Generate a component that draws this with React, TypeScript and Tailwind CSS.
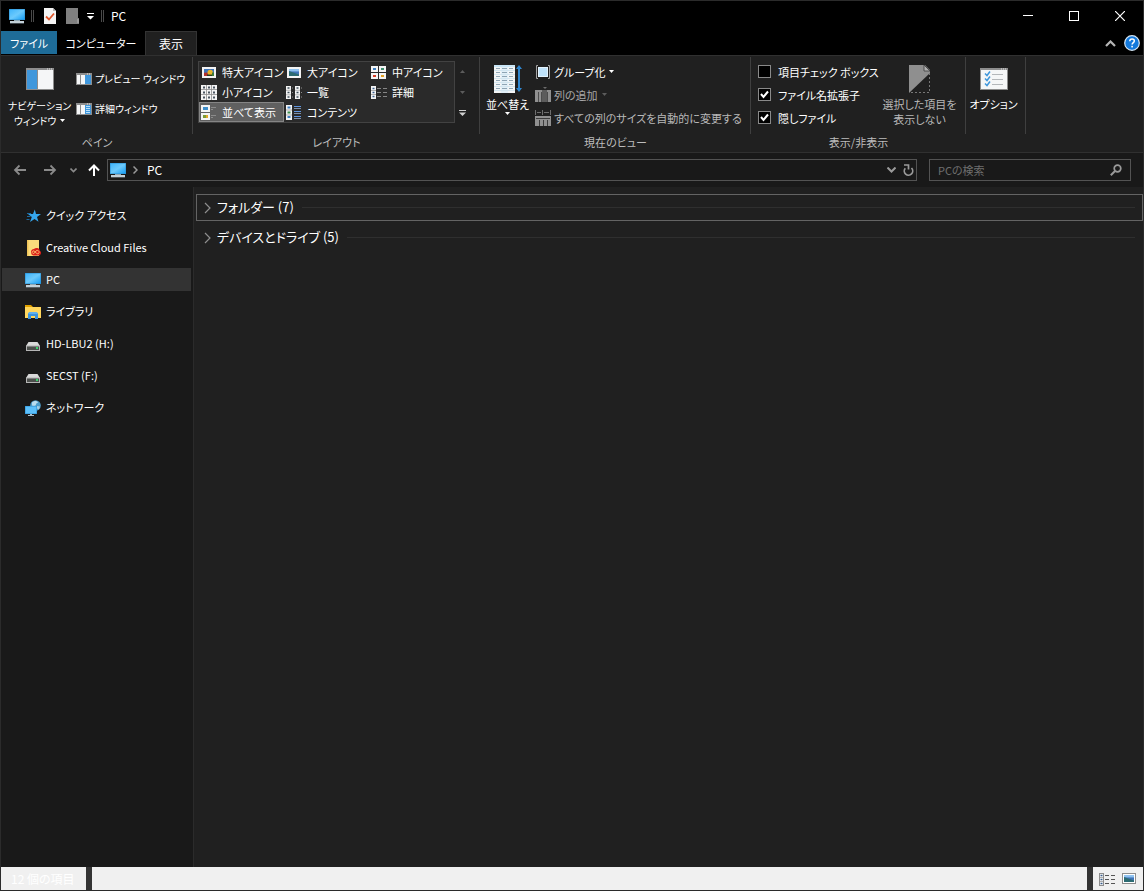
import { useState } from "react";
import type { ReactNode } from "react";

/* ---------- icons ---------- */

function Monitor() {
  return (
    <svg width="16" height="16" viewBox="0 0 16 16" aria-hidden="true">
      <defs>
        <linearGradient id="screen" x1="0" y1="0" x2="1" y2="1">
          <stop offset="0" stopColor="#3fb4fb" />
          <stop offset="0.5" stopColor="#6ccafd" />
          <stop offset="1" stopColor="#159df5" />
        </linearGradient>
      </defs>
      <rect x="0" y="1" width="16" height="11" fill="#2b8fd0" />
      <rect x="0.5" y="1.5" width="15" height="10" fill="url(#screen)" />
      <rect x="5" y="12" width="6" height="1" fill="#8fa7b5" />
      <rect x="1" y="13" width="14" height="2" fill="#c3d0d8" />
      <rect x="1" y="15" width="14" height="0.5" fill="#7e8e98" />
    </svg>
  );
}

function TaskSheet() {
  return (
    <svg width="12" height="16" viewBox="0 0 12 16" aria-hidden="true">
      <path d="M0 0h9l3 3v13H0z" fill="#f4f4f4" />
      <path d="M9 0v3h3z" fill="#b5b5b5" />
      <path d="M2 8.500l3 3 5-6" fill="none" stroke="#e0562b" strokeWidth="1.800" />
    </svg>
  );
}

function GraySheet() {
  return (
    <svg width="13" height="16" viewBox="0 0 13 16" aria-hidden="true">
      <path d="M0 0h12v10h1v6H0z" fill="#808080" />
      <path d="M11 11h2v4h-2z" fill="#9a9a9a" />
    </svg>
  );
}

function Caret({ className = "" }: { className?: string }) {
  return (
    <svg width="5" height="3" viewBox="0 0 5 3" className={className} aria-hidden="true">
      <path d="M0 0h5L2.5 3z" fill="currentColor" />
    </svg>
  );
}

function BigPane() {
  return (
    <svg width="28" height="22" viewBox="0 0 28 22" aria-hidden="true">
      <rect width="28" height="22" fill="#8d8d8d" />
      <rect x="1" y="2" width="10" height="19" fill="#3f97dc" />
      <rect x="12" y="2" width="15" height="19" fill="#f5f6f7" />
      <path d="M21 1h1M23 1h1M25 1h1" stroke="#e6e6e6" strokeWidth="1" />
    </svg>
  );
}

function SmallPane({ lines = false }: { lines?: boolean }) {
  return (
    <svg width="16" height="12" viewBox="0 0 16 12" aria-hidden="true">
      <rect width="16" height="12" fill="#8d8d8d" />
      <rect x="1" y="2" width="3" height="9" fill="#f5f6f7" />
      <rect x="5" y="2" width="4" height="9" fill="#f5f6f7" />
      <rect x="9" y="2" width="6" height="9" fill="#3f97dc" />
      {lines && <path d="M10 3.5h4M10 5.5h4M10 7.5h4M10 9.5h4" stroke="#b9e0fb" strokeWidth="1" />}
      <path d="M11 1h1M13 1h1" stroke="#e6e6e6" strokeWidth="1" />
    </svg>
  );
}

function Photo({ x, y, w, h, colorful = false }: { x: number; y: number; w: number; h: number; colorful?: boolean }) {
  return (
    <g transform={`translate(${x} ${y})`}>
      <rect width={w} height={h} fill="#3f74b8" />
      {colorful ? (
        <>
          <path d={`M0 ${h}V${h * 0.55}L${w * 0.4} ${h * 0.5}V${h}z`} fill="#b3322c" />
          <circle cx={w * 0.62} cy={h * 0.5} r={h * 0.38} fill="#e9b52a" />
          <rect x={w * 0.8} y={h * 0.5} width={w * 0.2} height={h * 0.5} fill="#3e7d36" />
          <path d={`M${w * 0.3} ${h * 0.8}h${w * 0.5}v${h * 0.2}h-${w * 0.5}z`} fill="#2c3c20" />
        </>
      ) : (
        <>
          <rect width={w} height={h * 0.35} fill="#8fc2f0" />
          <path d={`M0 ${h * 0.3}L${w} ${h * 0.8}V${h}H0z`} fill="#2c6b72" />
        </>
      )}
    </g>
  );
}

function ExtraLargeIcon() {
  return (
    <svg width="16" height="16" viewBox="0 0 16 16" aria-hidden="true">
      <rect x="1" y="3" width="14" height="11" fill="#f4f4f4" />
      <Photo x={3} y={5} w={10} h={7} colorful />
    </svg>
  );
}

function LargeIcon() {
  return (
    <svg width="16" height="16" viewBox="0 0 16 16" aria-hidden="true">
      <rect x="1" y="3" width="14" height="11" fill="#f4f4f4" />
      <Photo x={3} y={5} w={10} h={7} />
    </svg>
  );
}

function MediumIcon() {
  return (
    <svg width="16" height="16" viewBox="0 0 16 16" aria-hidden="true">
      <path d="M0 2h7v6H0zM8 2h7v6H8zM0 9h7v6H0zM8 9h7v6H8z" fill="#f4f4f4" />
      <rect x="2" y="4" width="3" height="2" fill="#3f7fc0" />
      <rect x="10" y="4" width="3" height="2" fill="#3f8f70" />
      <rect x="2" y="11" width="3" height="2" fill="#d63d26" />
      <rect x="10" y="11" width="3" height="2" fill="#e5a021" />
    </svg>
  );
}

function SmallIcon() {
  return (
    <svg width="16" height="16" viewBox="0 0 16 16" aria-hidden="true">
      <rect x="0" y="1" width="16" height="15" fill="#f4f4f4" />
      <path d="M5.5 1v15M10.5 1v15M0 5.500h16M0 10.500h16" stroke="#8d8d8d" strokeWidth="0.800" />
      <path d="M2 3.500h2M7 3.500h2M12 3.500h2M2 8.500h2M7 8.500h2M12 8.500h2M2 13.500h2M7 13.500h2M12 13.500h2" stroke="#4a5560" strokeWidth="2" />
    </svg>
  );
}

function ListIcon() {
  return (
    <svg width="16" height="16" viewBox="0 0 16 16" aria-hidden="true">
      <path d="M0 2h5v13H0zM9 2h5v13H9z" fill="#f4f4f4" />
      <path d="M1.5 4h2M1.5 8.5h2M1.5 13h2M10.5 4h2M10.5 8.5h2M10.5 13h2" stroke="#40505c" strokeWidth="1.6" />
      <path d="M0 6.3h5M0 10.8h5M9 6.3h5M9 10.8h5" stroke="#8d8d8d" strokeWidth="0.6" />
      <path d="M6 4h1M6 8.5h1M6 13h1M15 4h1M15 8.5h1M15 13h1" stroke="#8d8d8d" />
    </svg>
  );
}

function DetailsIcon({ light = false }: { light?: boolean }) {
  return (
    <svg width="17" height="16" viewBox="0 0 17 16" aria-hidden="true">
      <rect x="0.5" y="2.5" width="4" height="12" fill="#f8f8f8" stroke={light ? "#8d8d8d" : "#f4f4f4"} />
      <path d="M1.5 4.5h2M1.5 8.5h2M1.5 12.5h2" stroke="#3b5f8c" strokeWidth="1.4" />
      <path d="M0 6.5h5M0 10.5h5" stroke="#8d8d8d" strokeWidth="0.7" />
      <path
        d="M6 4.5h4M12 4.5h4M6 8.5h4M12 8.5h4M6 12.5h4M12 12.5h4"
        stroke={light ? "#555555" : "#868686"}
        strokeWidth="1"
      />
    </svg>
  );
}

function TilesIcon() {
  return (
    <svg width="16" height="16" viewBox="0 0 16 16" aria-hidden="true">
      <path d="M0 1h9v7H0zM0 9h9v7H0z" fill="#f4f4f4" />
      <rect x="2" y="3" width="5" height="3" fill="#3f8ec9" />
      <rect x="2" y="11" width="3" height="3" fill="#7b9a35" />
      <rect x="5" y="11" width="2" height="3" fill="#e0a72a" />
      <path d="M10 3.5h5M10 5.5h2M10 11.5h5M10 13.5h2" stroke="#8b8b8b" />
    </svg>
  );
}

function ContentIcon() {
  return (
    <svg width="16" height="16" viewBox="0 0 16 16" aria-hidden="true">
      <rect x="0" y="1" width="6" height="15" fill="#f4f4f4" />
      <path d="M1.5 3.5h3M1.5 13h3" stroke="#3f7fc0" strokeWidth="2" />
      <path d="M1.5 8.5h3" stroke="#3d8f4f" strokeWidth="2" />
      <path d="M0 6h6M0 11h6" stroke="#8d8d8d" strokeWidth="0.7" />
      <path d="M8 2.5h7M8 7.5h7M8 12.5h7" stroke="#5f96e0" />
      <path d="M8 4.5h7M8 9.5h7M8 14.5h7" stroke="#7d8fa8" />
    </svg>
  );
}

function SortIcon() {
  return (
    <svg width="28" height="28" viewBox="0 0 28 28" aria-hidden="true">
      <rect x="0" y="0" width="21" height="28" fill="#f3f5f6" />
      <rect x="0" y="0" width="21" height="2" fill="#c9e6f7" />
      <rect x="7" y="2" width="7" height="26" fill="#e2f0f8" />
      {[3, 7, 11, 15, 19, 23].map((y) => (
        <path key={y} d={`M2 ${y + 0.5}h4M8 ${y + 0.5}h5M15 ${y + 0.5}h4`} stroke="#8fa5b4" />
      ))}
      {[5, 9, 13, 17, 21, 25].map((y) => (
        <path key={y} d={`M0 ${y + 0.5}h21`} stroke="#d3e6f0" />
      ))}
      <path d="M25 3v22" stroke="#2f86cf" strokeWidth="2" />
      <path d="M22 4l3-4 3 4zM22 23l3 4 3-4z" fill="#2f86cf" />
    </svg>
  );
}

function GroupIcon() {
  return (
    <svg width="16" height="16" viewBox="0 0 16 16" aria-hidden="true">
      <path d="M3 1.5H1.5v13H3M13 1.5h1.5v13H13" fill="none" stroke="#a5a5a5" />
      <rect x="3" y="3" width="10" height="10" fill="#bfe2fa" />
      <rect x="3.5" y="3.5" width="9" height="9" fill="none" stroke="#e4f3fd" />
    </svg>
  );
}

function AddColumnIcon() {
  return (
    <svg width="16" height="16" viewBox="0 0 16 16" aria-hidden="true">
      <path d="M8 0h4l-2 2z" fill="#6c6c6c" />
      <path d="M0 3h7v12H0zM12 3h4v12h-4z" fill="#909090" />
      <rect x="7" y="3" width="5" height="12" fill="#5c5c5c" />
      <path d="M3.5 5v10M6.5 5v10M12.5 5v10" stroke="#4c4c4c" />
    </svg>
  );
}

function FitColumnsIcon() {
  return (
    <svg width="16" height="16" viewBox="0 0 16 16" aria-hidden="true">
      <path d="M0.5 0v5M7.5 0v5M15.5 0v5M2 2.5h4M9 2.5h5" stroke="#6e6e6e" />
      <rect x="0" y="6" width="16" height="10" fill="#909090" />
      <path d="M1 8.5h14M4.5 10v6M8.5 10v6M12.5 10v6" stroke="#3c3c3c" />
    </svg>
  );
}

function HideIcon() {
  return (
    <svg width="22" height="28" viewBox="0 0 22 28" aria-hidden="true">
      <path d="M0 0h16l5 5v3L0 28z" fill="#8f8f8f" />
      <path d="M15 0v6h6z" fill="#b0b0b0" stroke="#3c3c3c" strokeWidth="0.8" />
      <path d="M20.5 8v19.5H1" fill="none" stroke="#777777" strokeDasharray="2 2" />
    </svg>
  );
}

function OptionsIcon() {
  return (
    <svg width="28" height="22" viewBox="0 0 28 22" aria-hidden="true">
      <rect width="28" height="22" fill="#8d8d8d" />
      <rect x="1" y="2" width="26" height="19" fill="#f5f6f7" />
      <path d="M21 1h1M23 1h1M25 1h1" stroke="#e6e6e6" />
      <path d="M12 6.5h11M12 11.5h11M12 16.5h11" stroke="#b4b7ba" />
      <path d="M5 5.500l2 2 3-4M5 10.500l2 2 3-4M5 15.500l2 2 3-4" fill="none" stroke="#3f97dc" strokeWidth="1.5" />
    </svg>
  );
}

function QuickStar() {
  return (
    <svg width="16" height="16" viewBox="0 0 16 16" aria-hidden="true">
      <path d="M9.800 1.500l1.200 4.500H16l-4 3 1.500 4.700L9.500 11 5 14l1.800-5L3 6h5z" fill="#35a7ee" />
      <path d="M2 5.500h4M2 8.500h3.500M1.500 11.500h3" stroke="#1c699e" strokeWidth="1.200" />
    </svg>
  );
}

function CreativeFolder() {
  return (
    <svg width="16" height="16" viewBox="0 0 16 16" aria-hidden="true">
      <rect x="2" y="0" width="12" height="16" fill="#fbdc7c" />
      <rect x="2" y="0" width="1.500" height="16" fill="#f0c358" />
      <path d="M6 12.500a3 3 0 0 1 3-3.500 3.500 3.500 0 0 1 6 2 2.500 2.500 0 0 1-1 4.500H8.500A3 3 0 0 1 6 12.500z" fill="#db1f1a" />
      <path d="M12.500 14a1.800 1.800 0 1 0-1.500-3L9.500 13a1.300 1.300 0 1 1-.5-2c1 0 1.500 2.500 3.500 2.500" fill="none" stroke="#fbdc7c" strokeWidth="0.800" />
    </svg>
  );
}

function LibraryIcon() {
  return (
    <svg width="16" height="16" viewBox="0 0 16 16" aria-hidden="true">
      <path d="M0 1h6l2 2H0z" fill="#e0a100" />
      <path d="M0 3h16v11H0z" fill="#ffd75e" />
      <path d="M3 9h10v6h-3v-3H6v3H3z" fill="#3a93de" />
      <path d="M4 8h8l1 2H3z" fill="#5fb0ee" />
    </svg>
  );
}

function DriveIcon() {
  return (
    <svg width="16" height="16" viewBox="0 0 16 16" aria-hidden="true">
      <path d="M3.500 6h9L15 10H1z" fill="#d9d9d9" />
      <rect x="1" y="9.500" width="14" height="5.500" fill="#b5b5b5" />
      <rect x="2" y="10.500" width="12" height="3.500" fill="#4c4f4c" />
      <rect x="11" y="11" width="2" height="2" fill="#39d36a" />
    </svg>
  );
}

function NetworkIcon() {
  return (
    <svg width="16" height="16" viewBox="0 0 16 16" aria-hidden="true">
      <circle cx="10.500" cy="5.500" r="5.300" fill="#4d9cc9" />
      <path d="M7 2.500c2-2 5-2 6 0-1 1-2 .500-2 2s-2 1.500-4 1z" fill="#b9dcef" />
      <path d="M12 6l3 .500-1 3-2-1z" fill="#a3cfe6" />
      <rect x="0" y="6" width="12" height="8" fill="#2b8fd0" />
      <rect x="0.500" y="6.500" width="11" height="7" fill="#5cc0fb" />
      <path d="M5 14h2v1h2v1H3v-1h2z" fill="#a9bcc8" />
    </svg>
  );
}

/* ---------- ribbon building blocks ---------- */

function RibbonGroup({ label, width, children }: { label?: string; width: string; children: ReactNode }) {
  return (
    <section aria-label={label} className={`flex shrink-0 flex-col ${width}`}>
      <div className="flex h-[77px] border-r border-[#3f3f3f]">{children}</div>
      <div className="text-center leading-4 text-[#bdbdbd]">{label}</div>
    </section>
  );
}

const layouts: { name: string; icon: ReactNode }[] = [
  { name: "特大アイコン", icon: <ExtraLargeIcon /> },
  { name: "大アイコン", icon: <LargeIcon /> },
  { name: "中アイコン", icon: <MediumIcon /> },
  { name: "小アイコン", icon: <SmallIcon /> },
  { name: "一覧", icon: <ListIcon /> },
  { name: "詳細", icon: <DetailsIcon /> },
  { name: "並べて表示", icon: <TilesIcon /> },
  { name: "コンテンツ", icon: <ContentIcon /> },
];

function LayoutGallery() {
  const [selected, setSelected] = useState("並べて表示");
  return (
    <div className="mt-1 ml-[5px] flex h-[62px]">
      <div className="grid w-[257px] grid-cols-3 grid-rows-3 border border-[#424242] bg-[#2a2a2a]">
        {layouts.map(({ name, icon }) => (
          <button
            key={name}
            type="button"
            aria-pressed={selected === name}
            onClick={() => setSelected(name)}
            className={`flex min-w-0 items-center gap-[5px] border px-px whitespace-nowrap ${
              selected === name ? "border-[#858585] bg-[#606060]" : "border-transparent"
            }`}
          >
            <span className="w-4 shrink-0">{icon}</span>
            {name}
          </button>
        ))}
      </div>
      <div className="flex w-[14px] flex-col">
        <button type="button" aria-label="上へスクロール" className="flex flex-1 items-center justify-center text-[#5c5c5c]">
          <Caret className="rotate-180" />
        </button>
        <button type="button" aria-label="下へスクロール" className="flex flex-1 items-center justify-center text-[#5c5c5c]">
          <Caret />
        </button>
        <button type="button" aria-label="その他" className="flex flex-1 items-center justify-center text-[#d0d0d0]">
          <svg width="7" height="6" viewBox="0 0 7 6" aria-hidden="true">
            <path d="M0 0h7v1H0zM0 2.500h7L3.500 6z" fill="currentColor" />
          </svg>
        </button>
      </div>
    </div>
  );
}

function CheckRow({ label, checked }: { label: string; checked?: boolean }) {
  return (
    <label className="flex h-[23px] items-center gap-[7px] whitespace-nowrap">
      <span className="grid shrink-0">
        <input
          type="checkbox"
          defaultChecked={checked}
          className="peer col-start-1 row-start-1 size-[13px] appearance-none border border-[#8a8a8a] bg-black"
        />
        <svg
          width="13"
          height="13"
          viewBox="0 0 13 13"
          aria-hidden="true"
          className="pointer-events-none invisible col-start-1 row-start-1 peer-checked:visible"
        >
          <path d="M3 6l2.500 3L10 3.500" fill="none" stroke="#ffffff" strokeWidth="2" />
        </svg>
      </span>
      {label}
    </label>
  );
}

/* ---------- page sections ---------- */

function TitleBar() {
  return (
    <header className="flex h-[30px] items-center bg-black">
      <div className="flex flex-1 items-center pl-2">
        <Monitor />
        <span className="mx-[6px] h-3 w-[3px] border-x border-[#4a4a4a]" />
        <button type="button" aria-label="プロパティ" className="ml-1">
          <TaskSheet />
        </button>
        <button type="button" aria-label="新しいフォルダー" className="ml-[10px]">
          <GraySheet />
        </button>
        <button type="button" aria-label="クイック アクセス ツール バーのカスタマイズ" className="ml-2 text-white">
          <svg width="7" height="7" viewBox="0 0 7 7" aria-hidden="true">
            <path d="M0 0h7v1H0zM0 3h7L3.500 6.500z" fill="currentColor" />
          </svg>
        </button>
        <span className="mx-[7px] h-3 w-[3px] border-x border-[#4a4a4a]" />
        <h1 className="text-xs">PC</h1>
      </div>
      <button type="button" aria-label="最小化" className="flex h-full w-[46px] items-center justify-center">
        <svg width="10" height="10" viewBox="0 0 10 10" aria-hidden="true">
          <path d="M0 4.500h10" stroke="#ffffff" />
        </svg>
      </button>
      <button type="button" aria-label="最大化" className="flex h-full w-[46px] items-center justify-center">
        <svg width="10" height="10" viewBox="0 0 10 10" aria-hidden="true">
          <rect x="0.500" y="0.500" width="9" height="9" fill="none" stroke="#ffffff" />
        </svg>
      </button>
      <button type="button" aria-label="閉じる" className="flex h-full w-[46px] items-center justify-center">
        <svg width="10" height="10" viewBox="0 0 10 10" aria-hidden="true">
          <path d="M0 0l10 10M10 0L0 10" stroke="#ffffff" strokeWidth="1.200" />
        </svg>
      </button>
    </header>
  );
}

function TabBar() {
  return (
    <nav className="flex h-6 items-stretch bg-black">
      <button type="button" className="mb-px w-14 bg-[#1e6c98]">
        ファイル
      </button>
      <button type="button" className="w-[88px]">
        コンピューター
      </button>
      <button
        type="button"
        aria-current="page"
        className="w-[52px] border border-b-0 border-[#333333] bg-[#202020] text-xs"
      >
        表示
      </button>
      <div className="ml-auto flex items-center gap-2 pr-[3px]">
        <button type="button" aria-label="リボンの最小化">
          <svg width="11" height="7" viewBox="0 0 11 7" aria-hidden="true">
            <path d="M1 6l4.500-4.500L10 6" fill="none" stroke="#b5b5b5" strokeWidth="2.200" />
          </svg>
        </button>
        <button type="button" aria-label="ヘルプ">
          <svg width="16" height="16" viewBox="0 0 16 16" aria-hidden="true">
            <circle cx="8" cy="8" r="7.300" fill="#1379dc" stroke="#d5e6f5" strokeWidth="1.200" />
            <path d="M5.800 6.200c0-3 4.500-2.800 4.500-.2 0 1.700-2.200 1.600-2.200 3.600" fill="none" stroke="#ffffff" strokeWidth="1.500" />
            <rect x="7.300" y="10.800" width="1.600" height="1.600" fill="#ffffff" />
          </svg>
        </button>
      </div>
    </nav>
  );
}

function Ribbon() {
  return (
    <div className="flex h-[98px] overflow-hidden border-y border-[#303030] bg-[#202020] pt-px">
      <RibbonGroup label="ペイン" width="w-[192px]">
        <button
          type="button"
          className="flex w-[75px] shrink-0 flex-col items-center pt-[11px] pl-[2px] text-[10px] leading-[15px] whitespace-nowrap"
        >
          <BigPane />
          <span className="mt-2">ナビゲーション</span>
          <span className="flex items-center gap-1">
            ウィンドウ
            <Caret />
          </span>
        </button>
        <div className="flex flex-col pt-[7px] text-[10px]">
          <button type="button" className="flex h-[30px] items-center gap-[3px] whitespace-nowrap">
            <SmallPane />
            プレビュー ウィンドウ
          </button>
          <button type="button" className="flex h-[30px] items-center gap-[3px] whitespace-nowrap">
            <SmallPane lines />
            詳細ウィンドウ
          </button>
        </div>
      </RibbonGroup>

      <RibbonGroup label="レイアウト" width="w-[287px]">
        <LayoutGallery />
      </RibbonGroup>

      <RibbonGroup label="現在のビュー" width="w-[271px]">
        <button
          type="button"
          className="flex w-[55px] shrink-0 flex-col items-center pt-2 leading-[15px] whitespace-nowrap"
        >
          <SortIcon />
          <span className="mt-1">並べ替え</span>
          <Caret />
        </button>
        <div className="flex flex-col pt-[3px]">
          <button type="button" className="flex h-[23px] items-center gap-[3px] whitespace-nowrap">
            <GroupIcon />
            グループ化
            <Caret />
          </button>
          <button type="button" disabled className="flex h-[23px] items-center gap-[3px] whitespace-nowrap text-[#a8a8a8]">
            <AddColumnIcon />
            列の追加
            <Caret className="ml-px text-[#5c5c5c]" />
          </button>
          <button type="button" disabled className="flex h-[23px] items-center gap-[3px] whitespace-nowrap text-[#b8b8b8]">
            <FitColumnsIcon />
            すべての列のサイズを自動的に変更する
          </button>
        </div>
      </RibbonGroup>

      <RibbonGroup label="表示/非表示" width="w-[215px]">
        <div className="flex w-[123px] shrink-0 flex-col pt-[3px] pl-[7px]">
          <CheckRow label="項目チェック ボックス" />
          <CheckRow label="ファイル名拡張子" checked />
          <CheckRow label="隠しファイル" checked />
        </div>
        <button
          type="button"
          disabled
          className="flex flex-1 flex-col items-center pt-2 leading-[15px] whitespace-nowrap text-[#b8b8b8]"
        >
          <HideIcon />
          <span className="mt-1">選択した項目を</span>
          <span>表示しない</span>
        </button>
      </RibbonGroup>

      <RibbonGroup width="w-[60px]">
        <button type="button" className="flex flex-1 flex-col items-center pt-[11px] pr-1 leading-[15px] whitespace-nowrap">
          <OptionsIcon />
          <span className="mt-[7px]">オプション</span>
        </button>
      </RibbonGroup>
    </div>
  );
}

function AddressBar() {
  return (
    <div className="flex h-[34px] items-center bg-[#191919] pr-3 pl-3">
      <button type="button" aria-label="戻る" className="w-[30px]">
        <svg width="14" height="12" viewBox="0 0 14 12" aria-hidden="true">
          <path d="M13 6H2M6.500 1.500L2 6l4.500 4.500" fill="none" stroke="#8a8a8a" strokeWidth="1.800" />
        </svg>
      </button>
      <button type="button" aria-label="進む" className="w-[27px]">
        <svg width="14" height="12" viewBox="0 0 14 12" aria-hidden="true">
          <path d="M1 6h11M7.500 1.500L12 6l-4.500 4.500" fill="none" stroke="#8a8a8a" strokeWidth="1.800" />
        </svg>
      </button>
      <button type="button" aria-label="最近表示した場所" className="w-[18px]">
        <svg width="7" height="5" viewBox="0 0 7 5" aria-hidden="true">
          <path d="M0.500 0.500l3 3 3-3" fill="none" stroke="#8a8a8a" strokeWidth="1.600" />
        </svg>
      </button>
      <button type="button" aria-label="上へ" className="w-[19px]">
        <svg width="12" height="12" viewBox="0 0 12 12" aria-hidden="true">
          <path d="M6 12V1.500M1 6.500l5-5 5 5" fill="none" stroke="#ffffff" strokeWidth="2" />
        </svg>
      </button>
      <div className="flex h-[22px] flex-1 items-center border border-[#535353] pl-[2px]">
        <Monitor />
        <svg width="5" height="8" viewBox="0 0 5 8" aria-hidden="true" className="ml-[7px]">
          <path d="M0.500 0.500L4 4 0.500 7.500" fill="none" stroke="#9a9a9a" strokeWidth="1.500" />
        </svg>
        <a href="#pc" className="ml-[9px] text-xs">
          PC
        </a>
        <button type="button" aria-label="以前の場所" className="ml-auto">
          <svg width="9" height="6" viewBox="0 0 9 6" aria-hidden="true">
            <path d="M0.500 0.500l4 4 4-4" fill="none" stroke="#9a9a9a" strokeWidth="2" />
          </svg>
        </button>
        <button type="button" aria-label="最新の情報に更新" className="mr-[2px] ml-[7px]">
          <svg width="11" height="12" viewBox="0 0 11 12" aria-hidden="true">
            <path d="M2.300 4.200a4.200 4.200 0 1 0 6.200-.2" fill="none" stroke="#9a9a9a" strokeWidth="1.700" />
            <path d="M1 1h4.500v4.500" fill="none" stroke="#9a9a9a" strokeWidth="1.700" />
          </svg>
        </button>
      </div>
      <label className="ml-3 flex h-[22px] w-[202px] items-center border border-[#535353] pr-2 pl-2">
        <input
          type="search"
          aria-label="PCの検索"
          placeholder="PCの検索"
          className="min-w-0 flex-1 bg-transparent outline-none placeholder:text-[#6e6e6e]"
        />
        <svg width="12" height="12" viewBox="0 0 12 12" aria-hidden="true">
          <circle cx="7.500" cy="4.500" r="3.300" fill="none" stroke="#9a9a9a" strokeWidth="1.700" />
          <path d="M5 7L0.800 11.200" stroke="#9a9a9a" strokeWidth="2" />
        </svg>
      </label>
    </div>
  );
}

const places: { name: string; icon: ReactNode; current?: boolean }[] = [
  { name: "クイック アクセス", icon: <QuickStar /> },
  { name: "Creative Cloud Files", icon: <CreativeFolder /> },
  { name: "PC", icon: <Monitor />, current: true },
  { name: "ライブラリ", icon: <LibraryIcon /> },
  { name: "HD-LBU2 (H:)", icon: <DriveIcon /> },
  { name: "SECST (F:)", icon: <DriveIcon /> },
  { name: "ネットワーク", icon: <NetworkIcon /> },
];

function Sidebar() {
  return (
    <nav className="w-[192px] shrink-0 bg-[#191919] pr-[2px] pl-px">
      <ul className="flex flex-col gap-[9px] pt-[17px]">
        {places.map(({ name, icon, current }) => (
          <li key={name}>
            <a
              href="#place"
              aria-current={current ? "page" : undefined}
              className={`flex h-[23px] items-center gap-[5px] pl-[23px] ${current ? "bg-[#333333]" : ""}`}
            >
              {icon}
              <span className="pb-px">{name}</span>
            </a>
          </li>
        ))}
      </ul>
    </nav>
  );
}

function SectionHeader({ title, focused }: { title: string; focused?: boolean }) {
  return (
    <button
      type="button"
      aria-expanded="false"
      className={`flex h-[27px] w-full items-center border pr-[7px] pl-[7px] text-[13px] ${
        focused ? "border-[#646464]" : "border-transparent"
      }`}
    >
      <svg width="8" height="12" viewBox="0 0 8 12" aria-hidden="true">
        <path d="M1 1l5 5-5 5" fill="none" stroke="#8f8f8f" strokeWidth="1.200" />
      </svg>
      <span className="ml-[5px] pb-[2px] whitespace-nowrap">{title}</span>
      <span className="ml-2 h-px flex-1 bg-[#2f2f2f]" />
    </button>
  );
}

function StatusBar() {
  return (
    <footer className="flex h-6 items-stretch border-b border-[#2b2b2b] bg-[#f0f0f0]">
      <div className="flex w-[85px] items-center pl-[10px] text-xs whitespace-nowrap text-white">12 個の項目</div>
      <div className="w-[6px] bg-[#333333]" />
      <div className="flex-1" />
      <div className="w-[6px] bg-[#333333]" />
      <div className="flex w-[50px] items-center gap-[6px] pl-[6px]">
        <button type="button" aria-label="詳細表示">
          <DetailsIcon light />
        </button>
        <button type="button" aria-label="大きい縮小版で表示">
          <svg width="14" height="11" viewBox="0 0 14 11" aria-hidden="true">
            <rect x="0.500" y="0.500" width="13" height="10" fill="#ffffff" stroke="#8d8d8d" />
            <Photo x={2} y={2} w={10} h={7} />
          </svg>
        </button>
      </div>
    </footer>
  );
}

export default function App() {
  return (
    <div className="flex min-h-screen flex-col border-x border-t border-[#2b2b2b] bg-[#202020] font-['Noto_Sans_CJK_JP',sans-serif] text-[11px] leading-4 text-white [font-feature-settings:'palt']">
      <TitleBar />
      <TabBar />
      <Ribbon />
      <AddressBar />
      <div className="flex flex-1">
        <Sidebar />
        <main className="flex min-w-0 flex-1 flex-col gap-[3px] border-l border-[#2b2b2b] pt-[7px] pl-[2px]">
          <SectionHeader title="フォルダー (7)" focused />
          <SectionHeader title="デバイスとドライブ (5)" />
        </main>
      </div>
      <StatusBar />
    </div>
  );
}
